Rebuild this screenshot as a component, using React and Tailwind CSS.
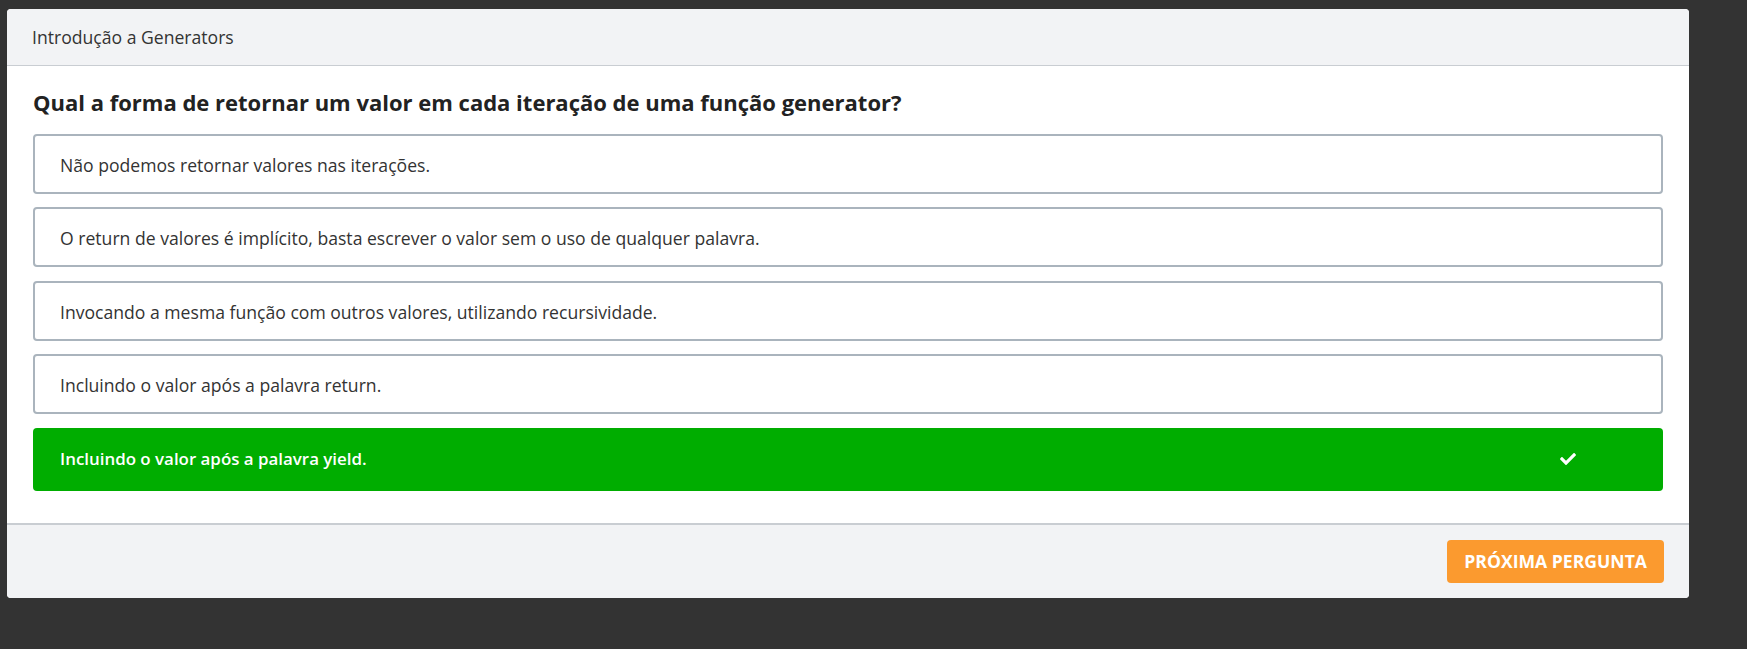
import { FaCheck } from 'react-icons/fa';

const options = [
  'Não podemos retornar valores nas iterações.',
  'O return de valores é implícito, basta escrever o valor sem o uso de qualquer palavra.',
  'Invocando a mesma função com outros valores, utilizando recursividade.',
  'Incluindo o valor após a palavra return.',
];

export default function App() {
  return (
    <div
      className="min-h-screen bg-[#333333] pl-[7px] pt-[9px]"
      style={{ fontFamily: '"Open Sans", sans-serif' }}
    >
      <div className="w-[1682px] bg-white rounded-[4px] overflow-hidden">
        {/* Header */}
        <div className="h-[57px] bg-[#f2f3f5] border-b border-[#c9cdd2] px-[25px] flex items-center">
          <span className="text-[17.6px] text-[#333333]">Introdução a Generators</span>
        </div>

        {/* Body */}
        <div className="px-[26px] pt-[20px] pb-[32px]">
          <h2 className="text-[22px] leading-[33px] font-bold text-[#222222] mb-[14.5px]">
            Qual a forma de retornar um valor em cada iteração de uma função generator?
          </h2>
          <div className="flex flex-col gap-[13.5px]">
            {options.map((opt) => (
              <div
                key={opt}
                className="h-[60px] border-2 border-[#aab4bd] rounded-[4px] px-[25px] pt-[3px] flex items-center text-[17.6px] text-[#333333]"
              >
                {opt}
              </div>
            ))}
            <div className="h-[63px] bg-[#00ad00] rounded-[4px] pl-[27px] pr-[27px] flex items-center text-white text-[16.9px] font-semibold">
              <span className="flex-1">Incluindo o valor após a palavra yield.</span>
              <span className="w-[136px] flex justify-center">
                <FaCheck className="w-[16px] h-[16px]" />
              </span>
            </div>
          </div>
        </div>

        {/* Footer */}
        <div className="h-[75px] bg-[#f2f3f5] border-t-2 border-[#c9cdd2] px-[25px] flex items-center justify-end">
          <button className="h-[43px] px-[17px] bg-[#fb9a2f] rounded-[4px] text-white font-bold text-[17.6px] uppercase">
            Próxima pergunta
          </button>
        </div>
      </div>
    </div>
  );
}
